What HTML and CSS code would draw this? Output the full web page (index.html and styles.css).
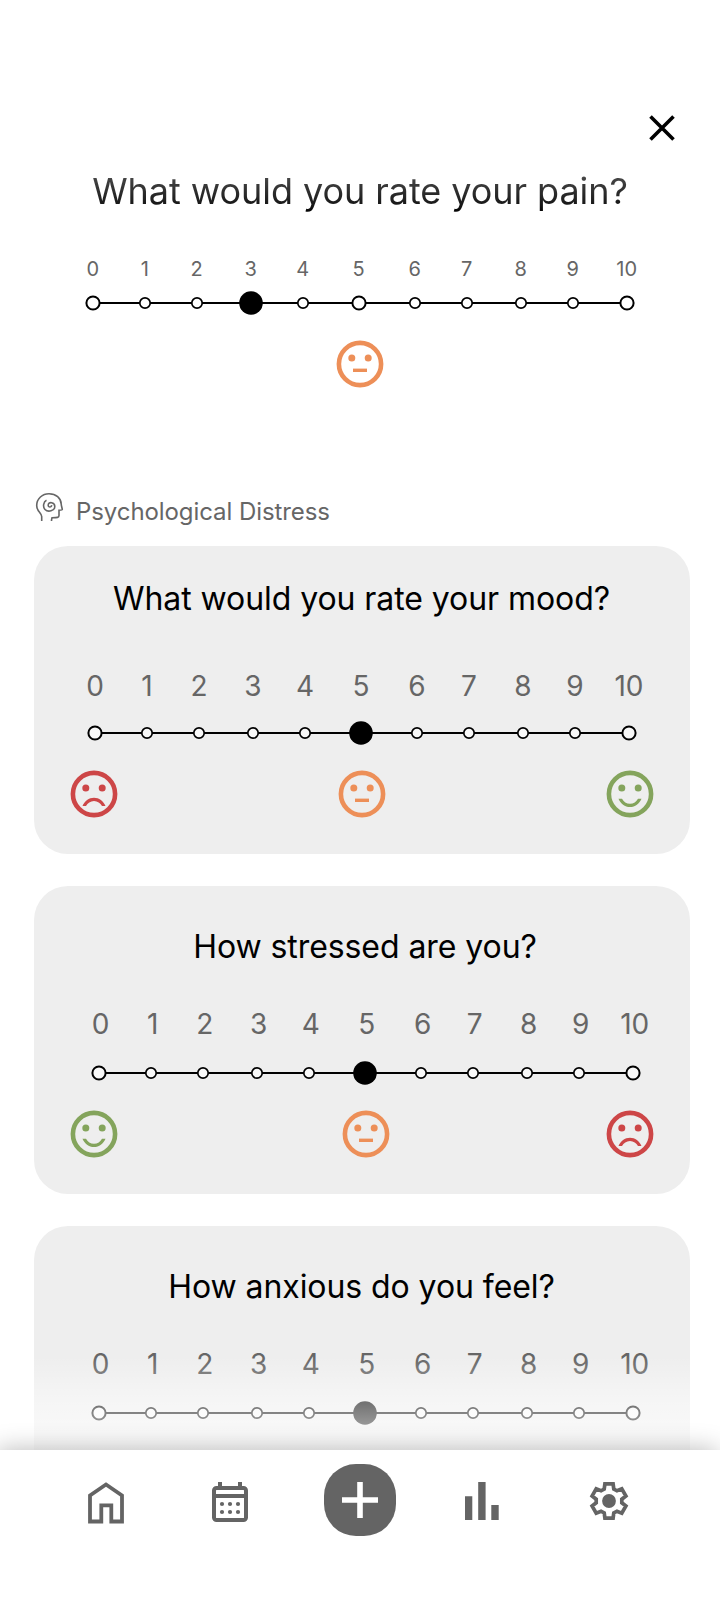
FILE: index.html
```html
<!DOCTYPE html>
<html lang="en">
<head>
<meta charset="utf-8">
<title>Daily check-in</title>
<link rel="stylesheet" href="styles.css">
</head>
<body>
<svg class="defs" width="0" height="0" aria-hidden="true">
  <defs>
    <g id="head">
      <circle r="21.1" fill="none" stroke="currentColor" stroke-width="4.6"/>
      <circle cx="-8.2" cy="-6" r="3.5" fill="currentColor"/>
      <circle cx="8.2" cy="-6" r="3.5" fill="currentColor"/>
    </g>
    <symbol id="sad" viewBox="-24 -24 48 48"><use href="#head"/><path fill="currentColor" d="M-11.5 12C-9.6 7.1-5 3.7 0 3.7S9.6 7.1 11.5 12H8C6.4 9 3.500 6.900 0 6.900S-6.400 9-8 12Z"/></symbol>
    <symbol id="neutral" viewBox="-24 -24 48 48"><use href="#head"/><path fill="currentColor" d="M-7 4.600H7V8H-7Z"/></symbol>
    <symbol id="happy" viewBox="-24 -24 48 48"><use href="#head"/><path fill="currentColor" d="M-11.500 4.700C-9.600 9.600-5 13 0 13S9.600 9.600 11.500 4.700H8C6.400 7.700 3.500 9.800 0 9.800S-6.400 7.700-8 4.700Z"/></symbol>
    <g id="stops">
      <path d="M0 0H534" stroke-width="2"/>
      <g stroke-width="1.7">
        <circle cx="52" r="5.200"/><circle cx="104" r="5.200"/><circle cx="158" r="5.200"/><circle cx="210" r="5.200"/>
        <circle cx="322" r="5.200"/><circle cx="374" r="5.200"/><circle cx="428" r="5.200"/><circle cx="480" r="5.200"/>
      </g>
      <g stroke-width="2"><circle r="6.600"/><circle cx="266" r="6.600"/><circle cx="534" r="6.600"/></g>
    </g>
  </defs>
</svg>
<div class="app">
  <main class="content">
    <header class="top">
      <svg class="close" viewBox="0 0 28 28"><path d="M2.500 2.500 25.500 25.500M25.500 2.500 2.500 25.500" stroke="#000" stroke-width="3.600"/></svg>
    </header>
    <section class="pain">
      <h1 class="pain-title">What would you rate your pain?</h1>
      <ol class="labels labels-small"><li>0</li><li>1</li><li>2</li><li>3</li><li>4</li><li>5</li><li>6</li><li>7</li><li>8</li><li>9</li><li>10</li></ol>
      <svg class="track" viewBox="-12 -12 558 24"><use href="#stops"/><circle class="value" cx="158" r="11.800"/></svg>
      <div class="faces faces-single"><svg class="face orange"><use href="#neutral"/></svg></div>
    </section>
    <h2 class="section-title">
      <svg class="mind" viewBox="0 0 30 32"><path d="M7.700 30V25.500C7.700 22 2.700 20.500 2.700 14.500C2.700 7.500 8.500 2.700 15 2.700C22 2.700 27 7 27.200 13C27.300 15 28 16.500 28.300 18.300C28.300 19 26.500 19.200 25 19.300V24.500C25 26.600 23.500 26.700 18 26.700C17.600 28 17.500 29 17.500 30M12.500 9.200C9.500 10.500 8.500 16 11 18.500C14 21.500 20.800 20 20.800 15.500C20.800 11 14.500 10.300 14.200 14C14 16.700 17.800 16.500 17.500 14.200"/></svg>
      <span>Psychological Distress</span>
    </h2>
    <section class="card card-mood">
      <h3 class="card-title">What would you rate your mood?</h3>
      <ol class="labels"><li>0</li><li>1</li><li>2</li><li>3</li><li>4</li><li>5</li><li>6</li><li>7</li><li>8</li><li>9</li><li>10</li></ol>
      <svg class="track" viewBox="-12 -12 558 24"><use href="#stops"/><circle class="value" cx="266" r="11.800"/></svg>
      <div class="faces"><svg class="face red"><use href="#sad"/></svg><svg class="face orange"><use href="#neutral"/></svg><svg class="face green"><use href="#happy"/></svg></div>
    </section>
    <section class="card">
      <h3 class="card-title stressed">How stressed are you?</h3>
      <ol class="labels"><li>0</li><li>1</li><li>2</li><li>3</li><li>4</li><li>5</li><li>6</li><li>7</li><li>8</li><li>9</li><li>10</li></ol>
      <svg class="track" viewBox="-12 -12 558 24"><use href="#stops"/><circle class="value" cx="266" r="11.800"/></svg>
      <div class="faces"><svg class="face green"><use href="#happy"/></svg><svg class="face orange mid"><use href="#neutral"/></svg><svg class="face red"><use href="#sad"/></svg></div>
    </section>
    <section class="card">
      <h3 class="card-title">How anxious do you feel?</h3>
      <ol class="labels"><li>0</li><li>1</li><li>2</li><li>3</li><li>4</li><li>5</li><li>6</li><li>7</li><li>8</li><li>9</li><li>10</li></ol>
      <svg class="track" viewBox="-12 -12 558 24"><use href="#stops"/><circle class="value" cx="266" r="11.800"/></svg>
    </section>
    <div class="fade"></div>
  </main>
  <nav class="nav">
    <svg class="home" viewBox="0 0 36 42"><path fill="none" stroke="#646464" stroke-width="3.800" d="M2 39.500V13.500L18 2.500 34 13.500V39.500H23.300V23.300H13.300V39.500Z"/></svg>
    <svg class="calendar" viewBox="0 0 36 40" fill="#646464"><rect x="2" y="6" width="32" height="32" rx="2.500" fill="none" stroke="#646464" stroke-width="4"/><path d="M6 0h4v5H6zM26 0h4v5h-4zM2 12h32v4H2z"/><circle cx="10" cy="22" r="2.100"/><circle cx="18" cy="22" r="2.100"/><circle cx="26" cy="22" r="2.100"/><circle cx="10" cy="30" r="2.100"/><circle cx="18" cy="30" r="2.100"/><circle cx="26" cy="30" r="2.100"/></svg>
    <button class="add" aria-label="Add"><svg class="plus" viewBox="0 0 36 36"><path d="M18 0V36M0 18H36" stroke="#fff" stroke-width="5.600"/></svg></button>
    <svg class="bars" viewBox="0 0 34 38"><path fill="#646464" d="M0 14.200h7.300V38H0zM13.200 0h7.400v38h-7.400zM26.300 23h7.400v15h-7.400z"/></svg>
    <svg class="gear" viewBox="-20 -20 40 40"><path fill="none" stroke="#646464" stroke-width="3.700" d="M-4.800-12-4.100-17.100H4.100L4.800-12 8-10.200 12.800-12.100 16.900-5 12.800-1.800V1.800L16.900 5 12.800 12.100 8 10.200 4.800 12 4.100 17.100H-4.100L-4.800 12-8 10.200-12.800 12.100-16.900 5-12.800 1.800V-1.800L-16.900-5-12.800-12.100-8-10.200Z"/><circle r="6.900" fill="#646464"/></svg>
  </nav>
</div>
</body>
</html>
```
FILE: styles.css
```css
* { box-sizing: border-box; margin: 0; padding: 0; }
body { background: #fff; font-family: Inter, sans-serif; color: #000; }
svg { display: block; flex: none; }
.defs { position: absolute; }
.app { width: 720px; height: 1600px; display: flex; flex-direction: column; overflow: hidden; background: #fff; }
.content { position: relative; height: 1450px; flex: none; overflow: hidden; }

.top { display: flex; justify-content: flex-end; padding: 114px 44px 0 0; }
.close { width: 28px; height: 28px; }
.pain { height: 354px; padding-top: 27px; }
.pain-title {
  font-size: 36px; font-weight: 400; line-height: 44px; text-align: center; letter-spacing: -0.06px;
  background: linear-gradient(#4c4c4c 5px, #151515 37px, #000); -webkit-background-clip: text; background-clip: text; color: transparent;
}

.labels {
  list-style: none; display: grid;
  grid-template-columns: 52px 52px 54px 52px 56px 56px 52px 54px 52px 54px 0;
  margin: 50px 0 0 61px; height: 34px; font-size: 28px; line-height: 34px; color: #666;
}
.labels li { width: 0; display: flex; justify-content: center; }
.labels-small { margin: 44px 0 0 92.7px; height: 24px; font-size: 20px; line-height: 24px; }

.track { width: 558px; height: 24px; stroke: #000; fill: #fff; }
.track .value { fill: #000; stroke: none; }
.pain .track { margin: 10px 0 0 81px; }

.faces { display: flex; justify-content: space-between; margin-top: 25px; padding: 0 36px; }
.faces-single { justify-content: center; }
.face { width: 48px; height: 48px; }
.mid { margin-left: 8px; }
.red { color: #cd4647; }
.orange { color: #ed8f58; }
.green { color: #84a45c; }

.section-title { display: flex; gap: 12px; height: 55px; padding-left: 34px; margin-top: -5px; font-size: 24px; font-weight: 400; line-height: 30px; letter-spacing: -0.08px; color: #666; }
.section-title span { padding-top: 6px; }
.mind { width: 30px; height: 32px; fill: none; stroke: #666; stroke-width: 1.6; }

.card { width: 656px; height: 308px; margin: 0 0 32px 34px; padding-top: 41px; border-radius: 34px; background: #eee; }
.card-title { font-size: 32px; font-weight: 400; line-height: 40px; text-align: center; letter-spacing: -0.07px; padding-right: 1px; }
.stressed { padding: 0 0 0 6px; }
.card .labels { margin: 40px 0 0 66.7px; }
.card .track { margin: 20px 0 0 53px; fill: #f8f8f8; }
.card-mood { padding-top: 33px; }
.card-mood .labels { margin: 50px 0 0 61px; }
.card-mood .track { margin: 18px 0 0 49px; }

.fade { position: absolute; left: 0; right: 0; bottom: 0; height: 94px; background: linear-gradient(rgba(255,255,255,0), rgba(255,255,255,.42) 45%, rgba(255,255,255,.76)); }

.nav { position: relative; height: 150px; flex: none; background: #fff; box-shadow: -3px 0 24px rgba(0,0,0,.28); display: flex; align-items: flex-start; padding: 14px 0 0 88px; }
.home { width: 36px; height: 42px; margin-top: 18px; }
.calendar { width: 36px; height: 40px; margin: 18px 0 0 88px; }
.add { width: 72px; height: 72px; margin-left: 76px; border: 0; border-radius: 32px; background: #646464; display: grid; place-items: center; }
.plus { width: 36px; height: 36px; }
.bars { width: 34px; height: 38px; margin: 18px 0 0 69px; }
.gear { width: 40px; height: 40px; margin: 17px 0 0 90px; }
```
